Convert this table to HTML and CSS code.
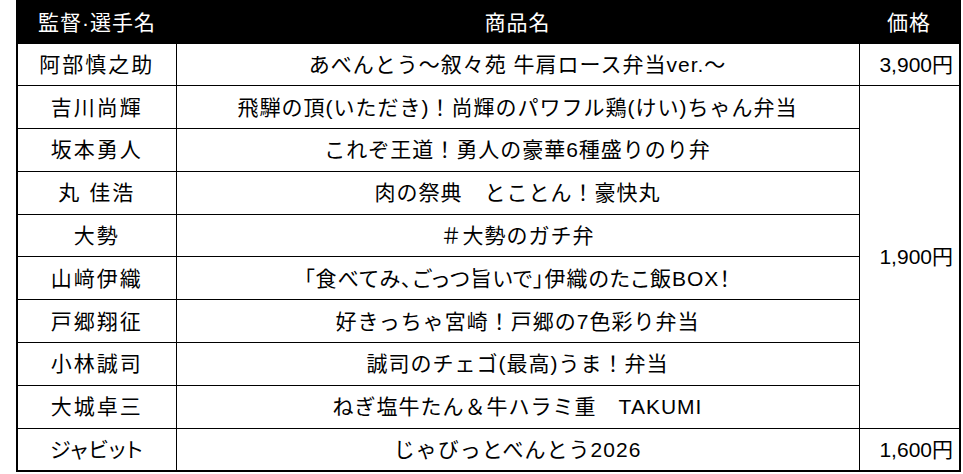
FILE: index.html
```html
<!DOCTYPE html>
<html lang="ja">
<head>
<meta charset="utf-8">
<link rel="stylesheet" href="styles.css">
</head>
<body>
<table class="menu">
  <colgroup>
    <col class="c-name">
    <col class="c-item">
    <col class="c-price">
  </colgroup>
  <thead>
    <tr>
      <th>監督·選手名</th>
      <th>商品名</th>
      <th>価格</th>
    </tr>
  </thead>
  <tbody>
    <tr>
      <td class="name">阿部慎之助</td>
      <td class="item">あべんとう〜叙々苑 牛肩ロース弁当ver.〜</td>
      <td class="price">3,900円</td>
    </tr>
    <tr>
      <td class="name">吉川尚輝</td>
      <td class="item">飛騨の頂(いただき)！尚輝のパワフル鶏(けい)ちゃん弁当</td>
      <td class="price" rowspan="8">1,900円</td>
    </tr>
    <tr>
      <td class="name">坂本勇人</td>
      <td class="item">これぞ王道！勇人の豪華6種盛りのり弁</td>
    </tr>
    <tr>
      <td class="name">丸 佳浩</td>
      <td class="item">肉の祭典　とことん！豪快丸</td>
    </tr>
    <tr>
      <td class="name">大勢</td>
      <td class="item">＃大勢のガチ弁</td>
    </tr>
    <tr>
      <td class="name">山﨑伊織</td>
      <td class="item prop">「食べてみ、ごっつ旨いで」伊織のたこ飯BOX！</td>
    </tr>
    <tr>
      <td class="name">戸郷翔征</td>
      <td class="item">好きっちゃ宮崎！戸郷の7色彩り弁当</td>
    </tr>
    <tr>
      <td class="name">小林誠司</td>
      <td class="item">誠司のチェゴ(最高)うま！弁当</td>
    </tr>
    <tr>
      <td class="name">大城卓三</td>
      <td class="item">ねぎ塩牛たん＆牛ハラミ重　TAKUMI</td>
    </tr>
    <tr>
      <td class="name prop">ジャビット</td>
      <td class="item">じゃびっとべんとう2026</td>
      <td class="price">1,600円</td>
    </tr>
  </tbody>
</table>
</body>
</html>
```

FILE: styles.css
```css
html, body {
  margin: 0;
  padding: 0;
  background: #ffffff;
}

body {
  padding-left: 16px;
  font-family: "Liberation Sans", "Noto Sans CJK JP", sans-serif;
  font-size: 21px;
  color: #000000;
}

.menu {
  border-collapse: collapse;
  table-layout: fixed;
  width: 943px;
  border: 2px solid #000000;
}

.c-name { width: 159px; }
.c-item { width: 683px; }
.c-price { width: 101px; }

.menu th {
  background: #000000;
  color: #ffffff;
  font-weight: normal;
  height: 40.5px;
  padding: 0;
  text-align: center;
  letter-spacing: 1px;
  line-height: 1;
}

.menu td {
  border: 1px solid #000000;
  height: 41.8px;
  padding: 0;
  line-height: 1;
  white-space: nowrap;
}

.name {
  text-align: center;
  letter-spacing: 2px;
}

.item {
  text-align: center;
  letter-spacing: 1px;
}

.prop {
  font-feature-settings: "palt";
}

.name.prop {
  letter-spacing: 1px;
}

.price {
  text-align: right;
  padding-right: 6px !important;
}
```
